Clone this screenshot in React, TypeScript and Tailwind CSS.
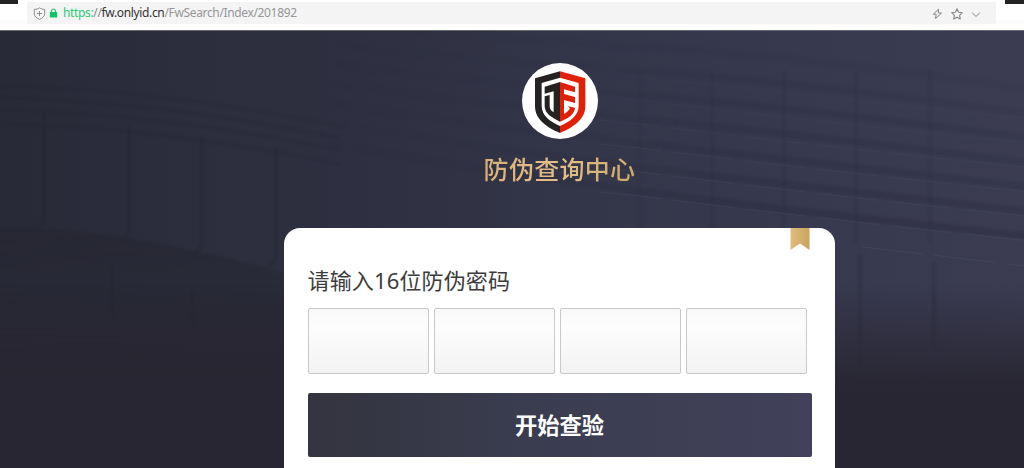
import React from "react";

const url = [
  { text: "https:", tone: "text-[#2fcb78]" },
  { text: "//", tone: "text-[#8b8b8b]" },
  { text: "fw.onlyid.cn", tone: "text-[#333333]" },
  { text: "/FwSearch/Index/201892", tone: "text-[#969696]" },
];

function AddressBar() {
  return (
    <header className="flex h-[30px] shrink-0 items-start justify-between bg-linear-to-b from-white from-65% via-[#fafafa] via-70% to-white to-85%">
      <div className="h-1 w-[18px] bg-[#222222]" />
      <div className="ml-[9px] mt-[2px] flex h-[22px] w-[969px] items-center bg-[#f4f4f4] pl-[6px] pr-[15px]">
        <svg className="h-[13px] w-[13px]" viewBox="0 0 13 13" fill="none" stroke="#8c8c8c">
          <path d="M6.500 .8C5 2 3.200 2.300 1.300 2.400v4.200c0 2.700 2 4.500 5.200 5.800 3.200-1.300 5.200-3.100 5.200-5.800V2.400C9.800 2.300 8 2 6.500.8ZM6.500 4v5M4 6.500h5" />
        </svg>
        <svg className="ml-[3px] h-[10px] w-[9px]" viewBox="0 0 9 10">
          <path d="M2.500 4.500V3a2 2 0 0 1 4 0v1.500" fill="none" stroke="#1fc46c" strokeWidth="1.200" />
          <rect x=".8" y="4" width="7.400" height="5.500" rx=".5" fill="#10c366" />
        </svg>
        <div className="ml-[5px] whitespace-pre font-['Noto_Sans',sans-serif] text-[12px] leading-[22px] tracking-[-0.35px]">
          {url.map((part) => (
            <span key={part.text} className={part.tone}>
              {part.text}
            </span>
          ))}
        </div>
        <div className="ml-auto flex items-center gap-[8px] pt-[1px] text-[#858585]">
          <svg className="h-3 w-[11px]" viewBox="0 0 11 12" fill="none" stroke="currentColor" strokeLinejoin="round">
            <path d="M6.500 1.200 1.300 6.200h2.900L3.500 10.500 9.600 5H6.400l.1-3.800Z" />
          </svg>
          <svg className="h-3 w-3" viewBox="0 0 12 12" fill="none" stroke="currentColor" strokeWidth="1.100" strokeLinejoin="round">
            <path d="m6 .8 1.600 3.400 3.700.5-2.700 2.600.7 3.700L6 9.200 2.700 11l.7-3.700L.7 4.700l3.700-.5L6 .8Z" />
          </svg>
          <svg className="h-3 w-[10px]" viewBox="0 0 10 12" fill="none" stroke="currentColor">
            <path d="m1 4.500 4 4 4-4" />
          </svg>
        </div>
      </div>
      <div className="ml-auto h-1 w-[19px] bg-[#222222]" />
    </header>
  );
}

const bands = [0, 1, 2, 3, 4, 5, 6].map((i) => {
  const left = 196 - i * 24;
  const right = 241 - i * 24.5;
  return {
    strength: 1 - i * 0.12,
    shadow: `M330 ${left - 52 + i * 4}Q500 ${left - 24 + i * 2} 640 ${left - 5}T1030 ${right - 5}`,
    edge: `M600 ${left - 4}L640 ${left}Q830 ${left + 24} 1030 ${right}`,
  };
});
const columns = [640, 712, 784, 856, 930];
const seams = [44, 129, 202, 276];

function Facade() {
  return (
    <svg className="absolute inset-0 h-full w-full" viewBox="0 30 1024 438" preserveAspectRatio="none">
      <defs>
        <linearGradient id="night">
          <stop offset="0" stopColor="#292a38" />
          <stop offset=".28" stopColor="#2d2f3f" />
          <stop offset=".65" stopColor="#35374b" />
          <stop offset="1" stopColor="#3b3c52" />
        </linearGradient>
        <linearGradient id="fade" x2="0" y2="1">
          <stop offset="0" stopColor="#282632" stopOpacity="0" />
          <stop offset="1" stopColor="#282632" />
        </linearGradient>
        <linearGradient id="slat" gradientUnits="userSpaceOnUse" x1="330" x2="720" y1="0" y2="0">
          <stop offset="0" stopColor="#2b2b3c" stopOpacity="0" />
          <stop offset="1" stopColor="#2b2c3e" />
        </linearGradient>
        <linearGradient id="hollow" gradientUnits="userSpaceOnUse" x1="0" x2="0" y1="227" y2="380">
          <stop offset="0" stopColor="#272632" stopOpacity=".7" />
          <stop offset=".35" stopColor="#282935" stopOpacity=".6" />
          <stop offset="1" stopColor="#282632" />
        </linearGradient>
        <filter id="soft" x="-5%" y="-5%" width="110%" height="110%" colorInterpolationFilters="sRGB">
          <feGaussianBlur stdDeviation="1.300" />
        </filter>
      </defs>
      <rect y="30" width="1024" height="438" fill="url(#night)" />
      <g filter="url(#soft)" fill="none">
        {bands.map((band) => (
          <path key={band.shadow} d={band.shadow} stroke="url(#slat)" strokeWidth="7" opacity={band.strength * 0.42} />
        ))}
        {columns.map((x) => (
          <path key={x} d={`M${x} 70V245`} stroke="#2d2e40" strokeWidth="4" opacity=".22" />
        ))}
        <path d="M860 255V365M934 262V350" stroke="#2d2f40" strokeWidth="4" opacity=".5" />
        {[92, 104, 116, 130].map((y, i) => (
          <path key={y} d={`M0 ${y - 6}Q150 ${y - 4} 340 ${y + 34}`} stroke="#262532" strokeWidth={2 + i * 0.3} opacity=".3" />
        ))}
        <path d="M-5 227Q110 226 290 274V475H-5Z" fill="url(#hollow)" />
        {seams.map((x, i) => (
          <path
            key={x}
            d={`M${x} ${112 + i * 12}V${217 + i * 13}q-1 7-7 9`}
            stroke="#252532"
            strokeWidth="3"
            opacity=".5"
          />
        ))}
        <path d="M112 265V320M192 290V340" stroke="#252431" strokeWidth="3" opacity=".3" />
      </g>
      <g fill="none" stroke="#54576b" strokeWidth="1" strokeDasharray="62 11">
        {bands.map((band) => (
          <path key={band.edge} d={band.edge} opacity={band.strength * 0.3} />
        ))}
        <path d="M862 247q80 9 162 19" opacity=".35" />
      </g>
      <rect y="285" width="1024" height="105" fill="url(#fade)" />
      <rect y="389" width="1024" height="79" fill="#282632" />
      <path d="M0 30.500H1024" stroke="#666771" />
    </svg>
  );
}

function Emblem() {
  return (
    <svg className="h-[76px] w-[76px]" viewBox="35 22 228 228">
      <circle cx="149" cy="136" r="114" fill="#fff" />
      <path d="M149 47 74 68v84c0 38 34 63 75 80v-21c-31-13-55-32-55-60V82l55-16Z" fill="#242321" />
      <path d="m149 47 76 21v84c0 38-35 63-76 80v-21c31-13 56-32 56-60V82l-56-16Z" fill="#e12008" />
      <path d="m103 93 46-14v119l-19-10v-81l-27 7Z" fill="#242321" />
      <path d="m103 122 15-4v34c0 9 5 15 13 18v18c-18-10-28-22-28-37Z" fill="#242321" />
      <path d="m149 79 45 14v17l-33-9v14l33 9v18l-33-9v42c8-4 14-9 18-17l-7-6 22 4c-1 17-17 31-45 42Z" fill="#e12008" />
    </svg>
  );
}

export default function App() {
  return (
    <div className="flex h-[468px] w-[1024px] flex-col overflow-hidden">
      <AddressBar />
      <main className="relative flex-1 overflow-hidden">
        <Facade />
        <div className="relative flex flex-col items-center pl-[95px] pt-[33px]">
          <Emblem />
          <h1 className="mt-[9px] bg-linear-to-r from-[#d9af78] via-[#e5bf8b] to-[#cda968] bg-clip-text font-['Noto_Sans_CJK_SC',sans-serif] text-[25px] font-medium leading-[40px] tracking-[0.3px] text-transparent">
            防伪查询中心
          </h1>
        </div>
        <section className="relative ml-[284px] mt-[40px] h-[260px] w-[551px] rounded-t-[16px] bg-white pl-[23.500px] pt-[36px]">
          <svg className="absolute right-[25px] top-0 h-[22px] w-[20px]" viewBox="0 0 20 22">
            <defs>
              <linearGradient id="ribbon">
                <stop stopColor="#dfbd7d" />
                <stop offset="1" stopColor="#cba260" />
              </linearGradient>
            </defs>
            <path d="M.5 0h19v22L10 15.500.5 22Z" fill="url(#ribbon)" />
          </svg>
          <label className="block font-['Noto_Sans','Noto_Sans_CJK_SC',sans-serif] text-[22px] font-normal leading-[32px] tracking-[0.150px] text-[#3c3c3c]">
            请输入16位防伪密码
          </label>
          <div className="mt-[12px] flex gap-[4.500px]">
            {[1, 2, 3, 4].map((n) => (
              <input
                key={n}
                className="h-[66px] w-[121.600px] rounded-[2px] border border-[#c9c9c9] bg-linear-to-b from-[#f8f8f8] via-[#fdfdfd] via-25% to-[#f3f3f3] outline-none"
              />
            ))}
          </div>
          <button className="mt-[19px] block h-[64px] w-[504px] rounded-[2px] bg-linear-to-r from-[#34343f] via-[#3a3d50] via-45% to-[#42405a] font-['Noto_Sans_CJK_SC',sans-serif] text-[22.300px] font-bold text-white">
            开始查验
          </button>
        </section>
      </main>
    </div>
  );
}
